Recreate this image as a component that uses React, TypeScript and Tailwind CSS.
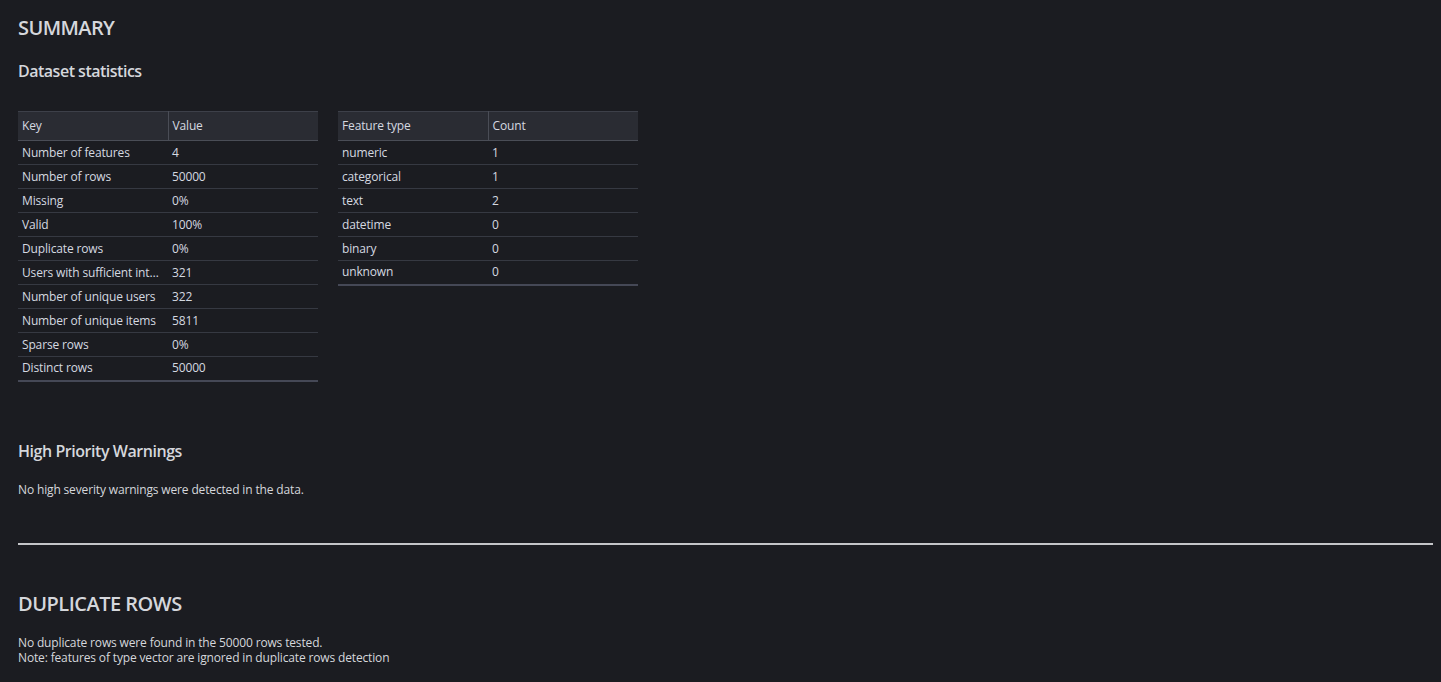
const stats: [string, string][] = [
  ['Number of features', '4'],
  ['Number of rows', '50000'],
  ['Missing', '0%'],
  ['Valid', '100%'],
  ['Duplicate rows', '0%'],
  ['Users with sufficient interactions', '321'],
  ['Number of unique users', '322'],
  ['Number of unique items', '5811'],
  ['Sparse rows', '0%'],
  ['Distinct rows', '50000'],
]

const types: [string, string][] = [
  ['numeric', '1'],
  ['categorical', '1'],
  ['text', '2'],
  ['datetime', '0'],
  ['binary', '0'],
  ['unknown', '0'],
]

function KvTable({ head, rows }: { head: [string, string]; rows: [string, string][] }) {
  return (
    <table className="w-[300px] table-fixed border-collapse text-[12px] tracking-[-0.15px] text-[#d5d9e0]">
      <thead>
        <tr className="h-[29px] border-t border-[#3d4049] bg-[#2a2c33]">
          <th className="w-[150px] border-r border-b border-[#4a4d56] px-1 text-left font-normal">{head[0]}</th>
          <th className="border-b border-[#4a4d56] px-1 text-left font-normal">{head[1]}</th>
        </tr>
      </thead>
      <tbody className="border-b-2 border-[#454856]">
        {rows.map(([k, v]) => (
          <tr key={k} className="h-[24px] border-b border-[#363942] last:border-b-0">
            <td className="truncate px-1">{k}</td>
            <td className="truncate px-1">{v}</td>
          </tr>
        ))}
      </tbody>
    </table>
  )
}

export default function App() {
  return (
    <div
      className="min-h-[682px] bg-[#1b1c21] pl-[18px] pr-[8px] pt-[14px] text-[#d5d7dc]"
      style={{ fontFamily: '"Open Sans", "Noto Sans", sans-serif' }}
    >
      <h1 className="text-[20px] leading-[28px] font-semibold tracking-[-0.6px]">SUMMARY</h1>
      <h2 className="mt-[18px] text-[16px] leading-[22px] font-semibold tracking-[-0.5px]">Dataset statistics</h2>

      <div className="mt-[29px] flex items-start gap-[20px]">
        <KvTable head={['Key', 'Value']} rows={stats} />
        <KvTable head={['Feature type', 'Count']} rows={types} />
      </div>

      <h2 className="mt-[58px] text-[16px] leading-[22px] font-semibold tracking-[-0.45px]">High Priority Warnings</h2>
      <p className="mt-[20px] text-[12px] leading-[16px] tracking-[-0.15px]">
        No high severity warnings were detected in the data.
      </p>

      <hr className="mt-[45px] border-t-2 border-[#c4c5c8]" />

      <h1 className="mt-[45px] text-[20px] leading-[28px] font-semibold tracking-[-0.5px]">DUPLICATE ROWS</h1>
      <p className="mt-[17px] text-[12px] leading-[15px] tracking-[-0.15px]">
        No duplicate rows were found in the 50000 rows tested.
        <br />
        Note: features of type vector are ignored in duplicate rows detection
      </p>
    </div>
  )
}
